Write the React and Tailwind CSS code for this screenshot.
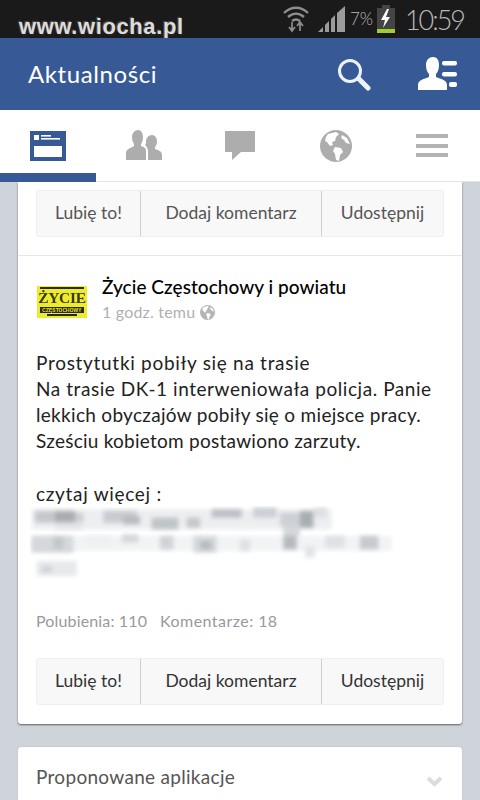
const F = { fontFamily: 'Lato, "Noto Sans", sans-serif' };

const blur = [
  [105,95,60,35,'#c4c8cc'],[165,95,60,35,'#a9acb1'],[225,100,25,30,'#ccd0d4'],[310,95,100,35,'#c8cbd0'],[370,110,50,25,'#b8bbc0'],
  [455,115,80,35,'#c0c4c8'],[560,115,40,30,'#c5c9cc'],[635,90,90,25,'#bcc0c5'],[760,85,70,30,'#ccd0d4'],[840,100,60,40,'#cdd0d4'],
  [900,95,40,50,'#a9adb2'],[940,85,40,30,'#dddfe2'],[165,130,80,20,'#e3e5e8'],[850,140,50,30,'#d4d7da'],
  [95,170,125,50,'#d5d8db'],[160,170,30,40,'#c4c7ca'],[365,165,50,25,'#d5d8dc'],[480,170,40,40,'#d0d3d6'],[580,170,70,50,'#d5d8dc'],
  [600,185,35,25,'#b7babf'],[720,180,30,35,'#dfe1e4'],[850,170,40,40,'#b6b9be'],[975,170,60,35,'#dfe1e4'],[1080,170,55,40,'#c7cace'],
  [915,200,30,35,'#e2e4e7'],[255,170,80,30,'#eef0f2'],[110,245,120,45,'#e6e8ea'],[125,260,30,20,'#d0d3d6'],
];

function Actions({ color }) {
  return (
    <div className={`mx-[18px] h-[47px] flex bg-[#f8f8f8] border border-[#efefef] rounded-[3px] text-[17.5px] ${color}`} style={F}>
      <div className="w-[104px] flex items-center justify-center border-r border-[#cfcfcf]">Lubię to!</div>
      <div className="w-[181px] flex items-center justify-center border-r border-[#cfcfcf]">Dodaj komentarz</div>
      <div className="flex-1 flex items-center justify-center">Udostępnij</div>
    </div>
  );
}

function Globe({ size, color }) {
  return (
    <svg width={size} height={size} viewBox="0 0 32 32">
      <circle cx="16" cy="16" r="16" fill={color} />
      <path d="M8 4l8-2 3 2-3 3-1 4-3 1 1 3-3 1-3-4-2-1 1-4zM15 17l6 1 2 4-3 3-1 6-3-1-1-6-2-3zM22 5l5 3 3 6-4-1-2-3-3-2z" fill="#fff" />
    </svg>
  );
}

function StatusBar() {
  return (
    <div className="relative h-[38px] shrink-0 bg-[#1a1a1a] flex items-center justify-end pr-[16px]">
      <div className="absolute left-[19px] top-[12px] text-[22px] font-bold leading-[30px] text-[#dcdcdc] [text-shadow:1px_2px_1px_#222,-1px_-1px_1px_#555]" style={{ fontFamily: '"Liberation Sans", sans-serif', letterSpacing: '0.6px' }}>www.wiocha.pl</div>
      <svg width="26" height="28" viewBox="0 0 26 28" className="mr-[9px]">
        <g fill="none" stroke="#8d8d8d" strokeWidth="2.4">
          <path d="M1 8C8 1 18 1 25 8" /><path d="M5 12c5-4.5 11-4.5 16 0" /><path d="M9 16c3-2.4 5-2.4 8 0" />
        </g>
        <path d="M9 17v8M6 22l3 4 3-4M17 26v-8M14 21l3-4 3 4" fill="none" stroke="#8d8d8d" strokeWidth="1.7" />
      </svg>
      <svg width="28" height="28" viewBox="0 0 28 28" className="mr-[4px]">
        <path d="M0 27l5-5v5zM7 27V20l4-4v11zM13 27V14l4-4v17zM19 27V8l8-7v26z" fill="#9b9b9b" />
      </svg>
      <span className="text-[17px] font-light text-[#b8b8b8] w-[25px]" style={F}>7%</span>
      <svg width="18" height="28" viewBox="0 0 18 28" className="mr-[10px] ml-[2px]">
        <rect x="5" y="0" width="8" height="3" fill="#444" />
        <rect x="0" y="3" width="18" height="21" fill="#444" />
        <rect x="0" y="24" width="18" height="4" fill="#9fd02f" />
        <path d="M10 4L4 15h4l-2 8 7-11H9l3-8z" fill="#fff" />
      </svg>
      <span className="text-[27px] font-light leading-none text-[#b9b9b9] tracking-[-2px]" style={F}>10:59</span>
    </div>
  );
}

function Header() {
  return (
    <div className="h-[72px] shrink-0 bg-[#375a97] flex items-center pl-[28px] text-white relative">
      <span className="text-[24px] flex-1 tracking-[0.6px]" style={F}>Aktualności</span>
      <svg width="34" height="34" viewBox="0 0 34 34" className="mr-[47px] mt-[2px]">
        <circle cx="13" cy="13" r="10.5" fill="none" stroke="#eef2f8" strokeWidth="3" />
        <path d="M22 21l9 9" stroke="#eef2f8" strokeWidth="5" strokeLinecap="round" />
      </svg>
      <svg width="40" height="34" viewBox="0 0 40 34" className="mr-[22px]">
        <path d="M15 0c4 0 6 3 6 8 0 4-1 7-3 9v3c5 2 11 3 11 8v5H0v-5c0-5 6-6 11-8v-3c-2-2-3-5-3-9 0-5 3-8 7-8z" fill="#fff" />
        <rect x="24" y="4" width="15" height="4.5" rx="2" fill="#fff" />
        <rect x="24" y="15" width="15" height="4.5" rx="2" fill="#fff" />
        <rect x="31" y="25" width="8" height="5" rx="2" fill="#fff" />
      </svg>
    </div>
  );
}

function Tabs() {
  const gray = '#adadad';
  return (
    <div className="h-[72px] shrink-0 bg-white grid grid-cols-5 relative z-10 border-b border-[#e4e4e4]">
      <div className="flex justify-center pt-[21px] border-b-[9px] border-[#375a97] -mb-px">
        <svg width="36" height="30" viewBox="0 0 36 30">
          <rect width="36" height="30" fill="#375a97" />
          <rect x="4" y="15" width="28" height="11" fill="#fff" />
          <rect x="4" y="4" width="5" height="5" fill="#fff" />
          <rect x="11" y="4" width="10" height="1.6" fill="#fff" />
          <rect x="11" y="7" width="19" height="1.6" fill="#fff" />
        </svg>
      </div>
      <div className="flex justify-center pt-[20px]">
        <svg width="36" height="30" viewBox="0 0 36 30" fill={gray}>
          <path d="M12 0c3 0 5 3 5 7 0 3-1 6-2 7v2c3 1 5 2 5 5v9H0v-7c0-4 5-5 8-7v-2c-1-2-2-4-2-7 0-4 3-7 6-7z" />
          <path d="M26 5c3 0 5 3 5 6s-1 5-2 6v2c3 1 7 2 7 6v5H22v-9c0-3-2-5-3-6 1-1 1-2 1-4 0-3 3-6 6-6z" />
        </svg>
      </div>
      <div className="flex justify-center pt-[21px]">
        <svg width="30" height="30" viewBox="0 0 30 30">
          <path d="M0 0h30v21H16l-9 8v-8H0z" fill={gray} />
        </svg>
      </div>
      <div className="flex justify-center pt-[20px]">
        <Globe size={32} color={gray} />
      </div>
      <div className="flex flex-col items-center gap-[5.5px] pt-[24px]">
        <div className="w-[32px] h-[4px] bg-[#b3b3b3]" />
        <div className="w-[32px] h-[4px] bg-[#b3b3b3]" />
        <div className="w-[32px] h-[4px] bg-[#b3b3b3]" />
      </div>
    </div>
  );
}

function Logo() {
  return (
    <div className="w-[50px] h-[32px] ml-[1px] mt-[10px] bg-[#eeea2c] flex flex-col items-center pt-[1px] blur-[0.4px] shrink-0">
      <div className="w-[44px] h-[2px] bg-[#2a2a10]" />
      <div className="h-[18px] text-[15.5px] font-bold leading-[18px] tracking-[-0.3px] text-[#3a3a12]" style={{ fontFamily: '"Liberation Serif", serif' }}>ŻYCIE</div>
      <div className="w-[44px] h-[6px] bg-[#2a2a10] text-[5px] leading-[6px] text-center font-bold text-[#eeea2c]" style={{ fontFamily: '"Liberation Sans", sans-serif' }}>CZĘSTOCHOWY</div>
      <div className="w-[30px] h-[2px] mt-[1px] bg-[#2a2a10]" />
    </div>
  );
}

function Post() {
  return (
    <div className="mx-[18px] shrink-0 h-[542px] bg-white rounded-b-[3px] shadow-[0_1px_2px_rgba(0,0,0,0.55)] pt-[8px]">
      <Actions color="text-[#555]" />
      <div className="mt-[18px] border-t border-[#e6e6e6] pt-[20px] pl-[18px] flex">
        <Logo />
        <div className="ml-[15px] -mt-[1px]">
          <div className="text-[19px] leading-[24px] text-black font-medium tracking-[0.05px]" style={F}>Życie Częstochowy i powiatu</div>
          <div className="flex items-center mt-[1px] text-[16px] leading-[24px] text-[#b0b0b0] tracking-[0.2px]" style={F}>
            1 godz. temu
            <span className="ml-[5px]"><Globe size={15} color="#b5b5b5" /></span>
          </div>
        </div>
      </div>
      <div className="px-[18px] mt-[26px] text-[19px] leading-[26px] text-[#222] whitespace-nowrap" style={F}>
        <div className="tracking-[0.7px]">Prostytutki pobiły się na trasie</div>
        <div className="tracking-[0.56px]">Na trasie DK-1 interweniowała policja. Panie</div>
        <div className="tracking-[0.3px]">lekkich obyczajów pobiły się o miejsce pracy.</div>
        <div className="tracking-[0.25px]">Sześciu kobietom postawiono zarzuty.</div>
        <div className="mt-[27px] tracking-[0.7px]">czytaj więcej :</div>
      </div>
      <svg width="370" height="80" viewBox="90 80 1110 240" className="ml-[12px] mt-[-1px]">
        <defs>
          <filter id="b" x="-10%" y="-10%" width="120%" height="120%"><feGaussianBlur stdDeviation="6" /></filter>
        </defs>
        <rect x="95" y="90" width="900" height="60" fill="#eceef0" filter="url(#b)" />
        <rect x="95" y="170" width="1080" height="45" fill="#f1f3f5" filter="url(#b)" />
        <g filter="url(#b)">
          {blur.map(([x, y, w, h, c], i) => <rect key={i} x={x} y={y} width={w} height={h} fill={c} />)}
        </g>
      </svg>
      <div className="px-[18px] mt-[23px] flex gap-[13px] text-[16px] leading-[24px] text-[#999] tracking-[0.15px]" style={F}>
        <span>Polubienia: 110</span>
        <span className="tracking-[0.45px]">Komentarze: 18</span>
      </div>
      <div className="mt-[25px]">
        <Actions color="text-[#333]" />
      </div>
    </div>
  );
}

function Suggest() {
  return (
    <div className="mx-[18px] mt-[23px] h-[60px] shrink-0 bg-white rounded-t-[3px] shadow-[0_0_1px_rgba(0,0,0,0.3)] flex items-center justify-between pl-[18px] pr-[19px]">
      <span className="text-[19px] text-[#555] tracking-[0.3px]" style={F}>Proponowane aplikacje</span>
      <svg width="17" height="11" viewBox="0 0 17 11" className="mt-[8px]">
        <path d="M2 2l6.5 6L15 2" fill="none" stroke="#dcdcdc" strokeWidth="4" />
      </svg>
    </div>
  );
}

export default function App() {
  return (
    <div className="w-[480px] h-[800px] overflow-hidden bg-[#cfd3da] flex flex-col">
      <StatusBar />
      <Header />
      <Tabs />
      <Post />
      <Suggest />
    </div>
  );
}
